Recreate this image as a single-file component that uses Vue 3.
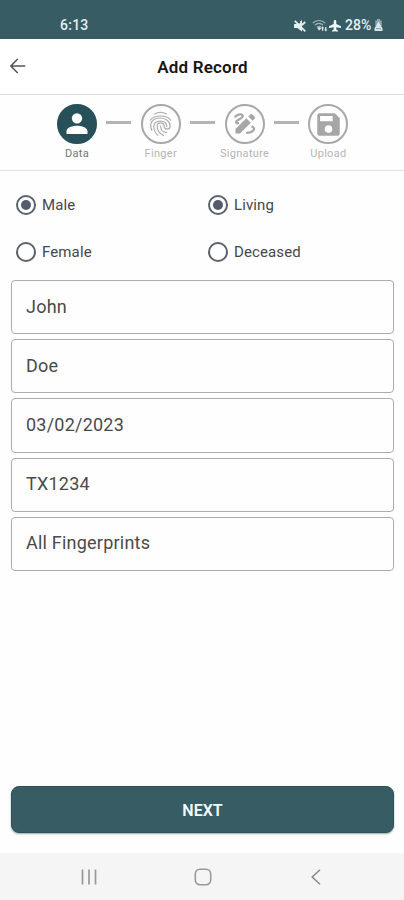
<script setup>
import { ref } from 'vue'

const steps = ['Data', 'Finger', 'Signature', 'Upload']
const gender = ref('Male')
const status = ref('Living')
const fields = ['John', 'Doe', '03/02/2023', 'TX1234', 'All Fingerprints']
</script>

<template>
  <div class="screen">
    <div class="statusbar">
      <span class="clock">6:13</span>
      <div class="indicators">
        <svg class="mute" viewBox="0 0 12 12"><path d="M0 4h3.2L8 0v11.5L3.4 8H0z" fill="#e6eef0" /><path d="M2.6 0 5.8 3.2" stroke="#385c64" stroke-width="2" /><path d="M.8.8 11.3 11.3M8 5l3.2-3" stroke="#e6eef0" stroke-width="1.8" fill="none" /></svg>
        <svg class="wifi" viewBox="0 0 16 13"><g fill="none" stroke="#a3b6ba" stroke-width="1.1"><path d="M.7 4.2C4 .6 10 .6 13.3 4.2" /><path d="M2.8 6.2c2.3-2.4 6-2.4 8.3 0" /><path d="M4.8 8.2c1.3-1.2 3-1.2 4.3 0" /></g><path d="m5 8.8 2.2-.8 2.3 1-2.3 2.6zM10.5 7.2l1.8 2h-1v2.6h-1.4V9.2h-.9zm3.3 5.3-1.6-2h.9V8h1.3v2.5h1z" fill="#d9e4e6" /></svg>
        <svg class="plane" viewBox="0 0 12 12"><path d="M6 0c.9 0 1.3.7 1.3 1.5v2.5L12 6.2V8L7.3 7.2v2.2l1.5 1.2v1.2L6 11.3l-2.8.5v-1.2l1.5-1.2V7.2L0 8V6.2L4.7 4V1.5C4.7.7 5.1 0 6 0z" fill="#f1f7f8" /></svg>
        <span class="percent">28%</span>
        <svg class="battery" viewBox="0 0 9 13"><path d="M3 0h3v1.5h1.7V7H1.3V1.5H3z" fill="#91a7ac" /><path d="M4.5 2.5 7 7l1.5 2v3H.5V9L2 7z" fill="#dbe6e8" /><path d="M2 9.7h5" stroke="#829ca1" /></svg>
      </div>
    </div>

    <header class="header">
      <svg class="back" viewBox="0 0 16 16" fill="none" stroke="#555" stroke-width="1.5"><path d="M15.3 8H1M7.7 1 .9 8l6.8 7" /></svg>
      <h1>Add Record</h1>
    </header>

    <nav class="stepper">
      <template v-for="(step, i) in steps" :key="step">
        <span v-if="i" class="connector"></span>
        <div class="step" :class="{ active: i === 0 }">
          <span class="bubble">
            <svg v-if="i === 0" viewBox="0 0 24 24"><path fill="currentColor" d="M12 11.6a4.8 4.8 0 1 0 0-9.6 4.8 4.8 0 0 0 0 9.6zM2.3 21.2v-2.5c0-3.4 6.1-5 9.7-5s9.7 1.6 9.7 5v2.5z" /></svg>
            <svg v-else-if="i === 1" class="print" viewBox="0 0 24 24"><g fill="none" stroke="currentColor" stroke-width="1.05" stroke-linecap="round"><path d="M6.6 2.6c3.3-1.6 7.5-1.6 10.8 0" /><path d="M2.9 8.2c3.6-5 14.6-5 18.2 0" /><path d="M4.2 17.2C1.3 9.4 6 6.2 12 6.2c5.2 0 8.6 3.4 8.6 7.4 0 3.3-5.4 3.5-5.4-.2 0-3.7-6.2-3.7-6.2 0 0 4.2 2.2 6.8 5.6 8.3" /><path d="M9.6 21.6c-4.6-4.5-5.6-12.4 2.4-12.7 3.1 0 5.7 2.1 5.7 4.8" /><path d="M12.1 13.4c0 3.8 2 5.9 5.5 5.5" /></g></svg>
            <svg v-else-if="i === 2" viewBox="0 0 24 24"><path fill="currentColor" d="M13.2 6.6 17.4 10.8 7.4 20.8H3.2v-4.2zM15 5l1.8-1.8c.6-.6 1.4-.6 2 0l2 2c.6.6.6 1.4 0 2L19.1 9z" /><path fill="none" stroke="currentColor" stroke-width="2.1" stroke-linecap="round" d="M3.1 5.2C5.8 2.8 9.4 2.4 9.9 4.5c.6 2.4-6.9 3.8-6.1 6 .2.7 1 .9 1.8.8M18.8 14.5c3.6 1.9.4 5.3-4.9 5.6" /></svg>
            <svg v-else class="save" viewBox="0 0 24 24"><path fill="currentColor" d="M17.6 2H4c-1.1 0-2 .9-2 2v16c0 1.1.9 2 2 2h16c1.1 0 2-.9 2-2V6.4zM12 19.5a3.4 3.4 0 1 1 0-6.8 3.4 3.4 0 0 1 0 6.8zm3.7-10.5H4.5V4.5h11.2z" /></svg>
          </span>
          <span class="caption">{{ step }}</span>
        </div>
      </template>
    </nav>

    <main class="form">
      <div class="radios">
        <label v-for="g in ['Male', 'Female']" :key="g" class="radio" @click="gender = g">
          <span class="dot" :class="{ on: gender === g }"></span><span>{{ g }}</span>
        </label>
        <label v-for="s in ['Living', 'Deceased']" :key="s" class="radio" @click="status = s">
          <span class="dot" :class="{ on: status === s }"></span><span>{{ s }}</span>
        </label>
      </div>
      <div class="fields">
        <div v-for="f in fields" :key="f" class="field">{{ f }}</div>
      </div>
      <button class="next" type="button">NEXT</button>
    </main>

    <footer class="navbar">
      <svg viewBox="0 0 18 18"><path d="M2.5 1.5v15M9 1.5v15M15.5 1.5v15" stroke="#999" stroke-width="1.7" /></svg>
      <svg viewBox="0 0 18 18"><rect x="1.3" y="1.3" width="15.4" height="15.4" rx="4.6" fill="none" stroke="#999" stroke-width="1.6" /></svg>
      <svg viewBox="0 0 18 18"><path d="M13 1.8 5.2 9l7.8 7.2" fill="none" stroke="#888" stroke-width="1.5" /></svg>
    </footer>
  </div>
</template>

<style>
body {
  margin: 0;
  background: #fff;
}
</style>

<style scoped>
.screen {
  display: flex;
  flex-direction: column;
  width: 404px;
  height: 900px;
  overflow: hidden;
  background: #fefefe;
  font-family: Roboto, "Liberation Sans", sans-serif;
  box-sizing: border-box;
}
.screen * { box-sizing: border-box; }
.screen svg { display: block; }
.statusbar {
  display: flex;
  flex: 0 0 38.5px;
  justify-content: space-between;
  padding: 17px 21px 0 60px;
  background: #385c64;
  color: #e6eef0;
  line-height: 17px;
}
.clock { font-size: 14px; font-weight: 500; letter-spacing: .25px; }
.indicators { display: flex; align-items: center; height: 17px; }
.mute { width: 12px; height: 12px; margin-right: 6px; }
.wifi { width: 16px; height: 13px; margin-right: 1px; }
.plane { width: 12px; height: 12px; margin-right: 4px; }
.percent { width: 29px; font-size: 14px; font-weight: 500; letter-spacing: .1px; white-space: nowrap; }
.battery { width: 9px; height: 13px; }
.header {
  display: grid;
  grid-template-columns: 40px 1fr 40px;
  align-items: center;
  flex: 0 0 56.5px;
  border-bottom: 1px solid #dedede;
  background: #fff;
}
.back { width: 16px; height: 16px; margin-left: 10px; margin-top: -1px; }
h1 {
  margin: 0;
  padding: 1px 0 0 1px;
  font-size: 17px;
  font-weight: 600;
  letter-spacing: .2px;
  line-height: 20px;
  text-align: center;
  color: #161616;
}
.stepper {
  display: flex;
  flex: 0 0 75.5px;
  padding: 9px 0 0 57px;
  border-bottom: 1px solid #dedede;
}
.step {
  display: flex;
  flex-direction: column;
  align-items: center;
  width: 40px;
  color: #a6a6a6;
}
.bubble {
  display: grid;
  place-items: center;
  width: 40px;
  height: 40px;
  border: 2px solid #a8a8a8;
  border-radius: 50%;
}
.bubble svg { width: 26px; height: 26px; }
.bubble .print { width: 27px; height: 27px; color: #adadad; }
.bubble .save { width: 27px; height: 27px; }
.active .bubble { border-color: #285059; background: #285059; color: #fff; }
.caption { margin-top: 3px; font-size: 11px; line-height: 14px; letter-spacing: .3px; white-space: nowrap; color: #b5b5b5; }
.active .caption { color: #6c7778; }
.connector { width: 25px; height: 2.5px; margin: 17px 9.4px 0; background: #b4b4b4; }
.form { display: flex; flex: 1; flex-direction: column; padding: 23.5px 10px 20px 11px; }
.radios {
  display: grid;
  grid-template-columns: 192px 1fr;
  grid-template-rows: 20px 20px;
  grid-auto-flow: column;
  row-gap: 27px;
  padding: 1px 0 0 5px;
}
.radio { display: flex; align-items: center; gap: 6px; font-size: 15px; letter-spacing: .12px; color: #484848; }
.dot { display: grid; place-items: center; width: 20px; height: 20px; border: 2px solid #5c626b; border-radius: 50%; }
.dot.on::after { content: ""; width: 10px; height: 10px; border-radius: 50%; background: #555b6b; }
.fields { display: flex; flex-direction: column; gap: 5px; margin-top: 18px; }
.field {
  display: flex;
  align-items: center;
  height: 54.2px;
  padding: 0 14px 2px;
  border: 1px solid #acacac;
  border-radius: 4px;
  color: #4a4a4a;
  font-size: 18px;
  letter-spacing: .22px;
}
.next {
  height: 47px;
  margin-top: auto;
  padding: 2px 0 0;
  border: 1px solid #2b525b;
  border-radius: 8px;
  background: #385c64;
  box-shadow: 0 1px 2px rgba(20, 40, 45, .4);
  color: #f4fafb;
  font: 600 16px Roboto, "Liberation Sans", sans-serif;
}
.navbar {
  display: flex;
  flex: 0 0 47px;
  align-items: center;
  justify-content: space-between;
  padding: 0 79px 0 80px;
  background: #f5f5f5;
}
.navbar svg { width: 18px; height: 18px; }
</style>
